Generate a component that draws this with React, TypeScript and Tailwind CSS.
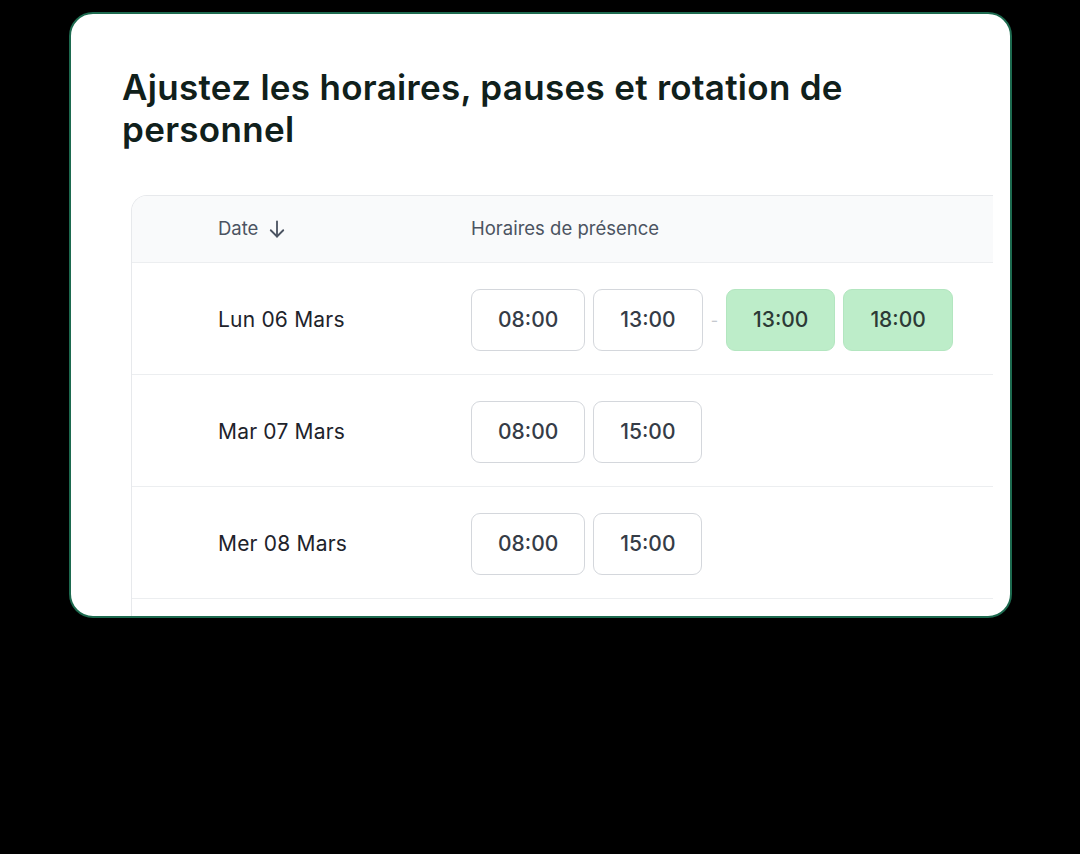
import * as React from "react";

type Slot = { from: string; to: string; green?: boolean };

const rows: { date: string; slots: Slot[] }[] = [
  {
    date: "Lun 06 Mars",
    slots: [
      { from: "08:00", to: "13:00" },
      { from: "13:00", to: "18:00", green: true },
    ],
  },
  { date: "Mar 07 Mars", slots: [{ from: "08:00", to: "15:00" }] },
  { date: "Mer 08 Mars", slots: [{ from: "08:00", to: "15:00" }] },
];

function TimeBox({ value, green }: { value: string; green?: boolean }) {
  return (
    <div
      className={
        green
          ? "h-[62px] px-[26px] flex items-center justify-center rounded-[9px] bg-[#bdedc9] border border-[#b3e6c0] text-[21px] font-medium text-[#2c3a36]"
          : "h-[62px] px-[26px] flex items-center justify-center rounded-[9px] bg-white border border-[#d4d7dc] text-[21px] font-medium text-[#353c47]"
      }
    >
      {value}
    </div>
  );
}

export default function App() {
  return (
    <div
      className="w-[1080px] h-[854px] bg-black pt-[12px] pl-[69px]"
      style={{ fontFamily: "Inter, 'Liberation Sans', sans-serif" }}
    >
      <div className="w-[943px] h-[606px] bg-white rounded-[24px] border-2 border-[#1d6a4f] overflow-hidden pt-[52px] pl-[51px]">
        <h1 className="w-[800px] text-[35px] leading-[42px] font-semibold text-[#10201b] tracking-[0.3px]">
          Ajustez les horaires, pauses et rotation de personnel
        </h1>

        <div className="mt-[45px] ml-[9px] w-[862px] border-l border-t border-[#e7e9ec] rounded-tl-[16px] overflow-hidden">
          <div className="flex items-center h-[67px] bg-[#f9fafb] border-b border-[#eceef0] text-[18.5px] text-[#4b5361]">
            <div className="w-[339px] pl-[86px] flex items-center gap-[9px]">
              Date
              <svg width="20" height="20" viewBox="0 0 24 24" fill="none" stroke="currentColor" strokeWidth="2.2" strokeLinecap="round" strokeLinejoin="round">
                <path d="M12 3v18" />
                <path d="M4.5 13.5L12 21l7.5-7.5" />
              </svg>
            </div>
            <div>Horaires de présence</div>
          </div>

          {rows.map((row) => (
            <div key={row.date} className="flex items-center h-[112px] border-b border-[#eceef0]">
              <div className="w-[339px] pl-[86px] pt-[3px] text-[21px] tracking-[0.2px] text-[#1e232b]">{row.date}</div>
              <div className="flex items-center gap-[8px] pt-[2px]">
                {row.slots.map((s, i) => (
                  <React.Fragment key={i}>
                    {i > 0 && <span className="text-[#c5c9cf] text-[16px]">-</span>}
                    <TimeBox value={s.from} green={s.green} />
                    <TimeBox value={s.to} green={s.green} />
                  </React.Fragment>
                ))}
              </div>
            </div>
          ))}
          <div className="h-[112px]" />
        </div>
      </div>
    </div>
  );
}
